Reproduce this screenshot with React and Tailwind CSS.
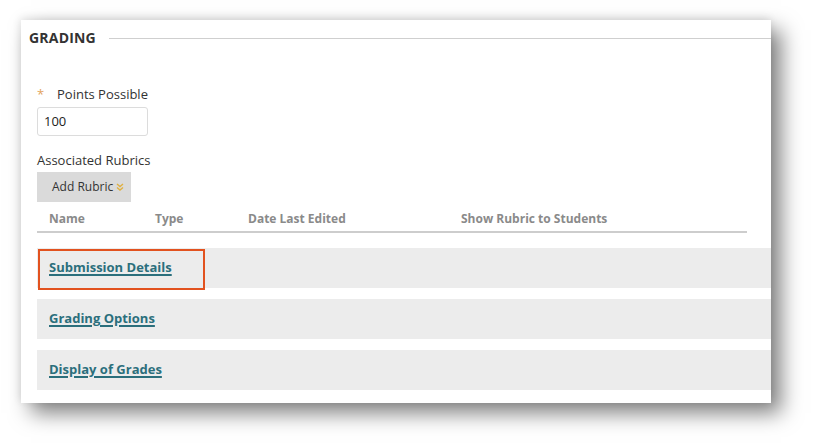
import React from "react";

const sections = ["Submission Details", "Grading Options", "Display of Grades"];
const columns = [
  { label: "Name", w: "w-[106px]" },
  { label: "Type", w: "w-[93px]" },
  { label: "Date Last Edited", w: "w-[213px]" },
  { label: "Show Rubric to Students", w: "" },
];

function DoubleChevron() {
  return (
    <svg width="8" height="8" viewBox="0 0 8 8" className="ml-[3px]">
      <path d="M1 1 L4 3.5 L7 1" fill="none" stroke="#e0b040" strokeWidth="1.4" />
      <path d="M1 4.5 L4 7 L7 4.5" fill="none" stroke="#e0b040" strokeWidth="1.4" />
    </svg>
  );
}

export default function App() {
  return (
    <div
      className="w-[813px] h-[446px] bg-white pl-[21px] pt-[20px] overflow-hidden"
      style={{ fontFamily: "'Open Sans', 'Liberation Sans', sans-serif" }}
    >
      <div className="w-[750px] h-[383px] bg-white shadow-[10px_10px_20px_rgba(0,0,0,0.5),-1px_-2px_8px_rgba(0,0,0,0.1)] flex flex-col">
        {/* section header */}
        <div className="flex items-center h-[34px] pl-[8px]">
          <span className="text-[14px] font-bold text-[#333] tracking-[0.2px]">GRADING</span>
          <div className="flex-1 h-px bg-[#cfcfcf] ml-[13px] mt-[2px]" />
        </div>

        <div className="flex flex-col pl-[16px]">
          <div className="mt-[32px] flex items-center h-[18px] text-[13px] text-[#333]">
            <span className="text-[#e3a35c] w-[20px]">*</span>
            <span>Points Possible</span>
          </div>
          <div className="mt-[3px] w-[111px] h-[29px] border border-[#dcdcdc] rounded-[3px] flex items-center pl-[6px] text-[13px] text-[#222]">
            100
          </div>

          <div className="mt-[16px] h-[18px] flex items-center text-[13px] text-[#333]">
            Associated Rubrics
          </div>
          <div className="mt-[2px] w-[94px] h-[30px] bg-[#dadada] flex items-center pl-[15px] text-[12px] text-[#333]">
            Add Rubric
            <DoubleChevron />
          </div>

          {/* rubric table header */}
          <div className="mt-[4px] w-[710px] border-b-2 border-[#cdcdcd] flex items-center h-[27px] pl-[12px] text-[12px] font-bold text-[#8a8a8a]">
            {columns.map((c) => (
              <span key={c.label} className={c.w}>
                {c.label}
              </span>
            ))}
          </div>

          {/* collapsible sections */}
          <div className="mt-[15px] flex flex-col gap-[11px]">
            {sections.map((s, i) => (
              <div key={s} className="relative h-[40px] bg-[#ececec] flex items-center pl-[12px]">
                <a className="text-[13px] font-bold text-[#2b6f7c] underline underline-offset-2 decoration-[1.5px]">
                  {s}
                </a>
                {i === 0 && (
                  <div className="absolute left-[1px] top-[1px] w-[167px] h-[41px] border-2 border-[#e2521f]" />
                )}
              </div>
            ))}
          </div>
        </div>
      </div>
    </div>
  );
}
